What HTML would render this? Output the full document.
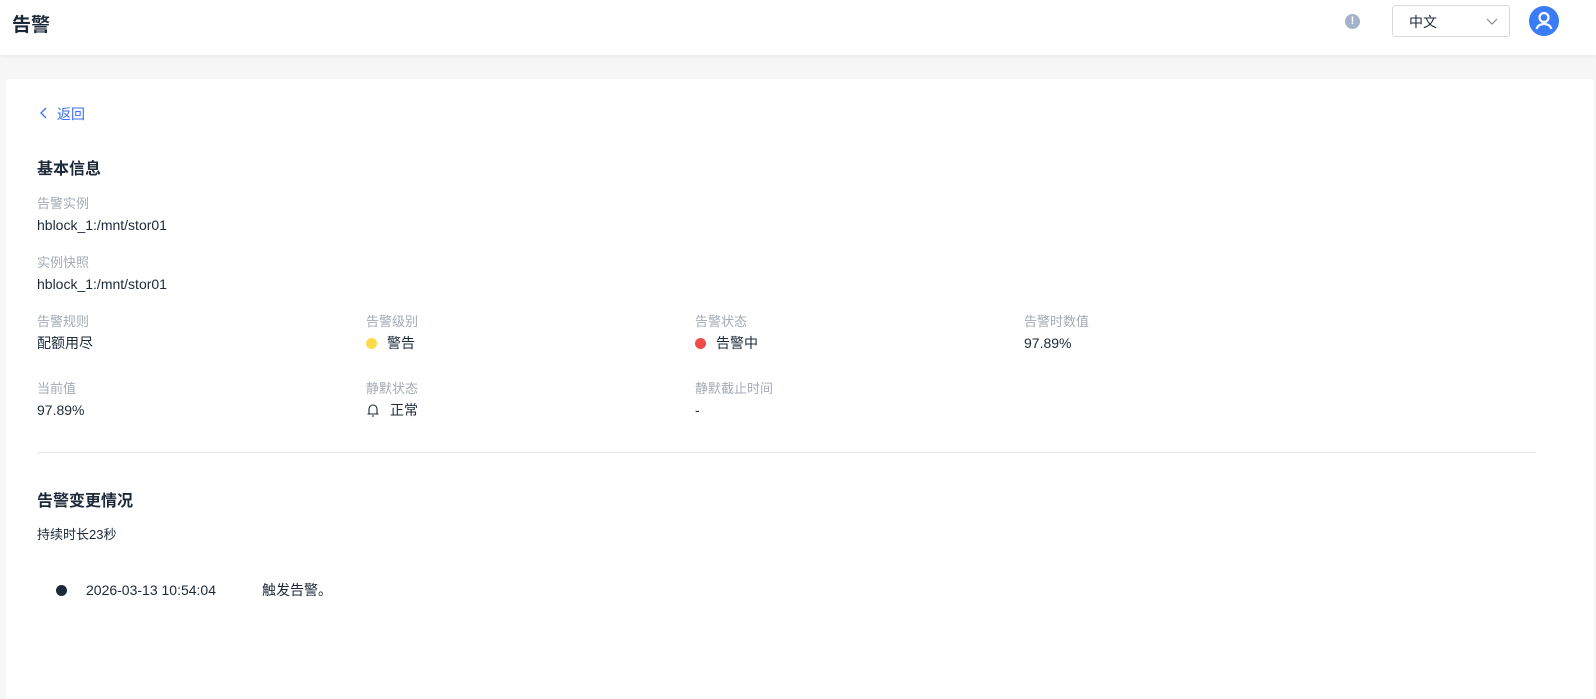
<!DOCTYPE html>
<html><head><meta charset="utf-8"><style>
*{margin:0;padding:0;box-sizing:border-box}
body{width:1596px;height:679px;overflow:hidden;background:#f7f7f7;font-family:"Liberation Sans","Noto Sans CJK SC",sans-serif;color:#1d2939;position:relative}
.hdr{position:absolute;left:0;top:0;width:1596px;height:55px;background:#fff;box-shadow:0 2px 4px rgba(0,0,0,.06)}
.t{position:absolute}
.card{position:absolute;left:6px;top:79px;width:1588px;height:620px;background:#fff;border-radius:4px}
.lab{position:absolute;font-size:13px;color:#a4abb5;line-height:16px}
.val{position:absolute;font-size:14px;color:#1d2939;line-height:18px}
.h{position:absolute;font-size:16px;font-weight:bold;color:#1d2939}
.dot{display:inline-block;width:11px;height:11px;border-radius:50%;vertical-align:-1px;margin-right:10px}
</style></head><body>
<div class="hdr">
 <div class="t" style="left:12px;top:10px;font-size:19px;font-weight:bold;color:#1d2939">告警</div>
 <div class="t" style="left:1345px;top:14px;width:15px;height:15px;border-radius:50%;background:#a3b3c9;color:#fff;font-size:11px;font-weight:bold;text-align:center;line-height:15px">!</div>
 <div class="t" style="left:1392px;top:5px;width:118px;height:32px;border:1px solid #d9d9d9;border-radius:3px">
  <span class="t" style="left:16px;top:6px;font-size:14px">中文</span>
  <svg class="t" style="left:93px;top:10px" width="12" height="10" viewBox="0 0 12 10"><path d="M1 3l5 5 5-5" fill="none" stroke="#888" stroke-width="1.2"/></svg>
 </div>
 <svg class="t" style="left:1529px;top:6px" width="30" height="30" viewBox="0 0 30 30"><circle cx="15" cy="15" r="15" fill="#3a7bf7"/><circle cx="15" cy="11.5" r="4.5" fill="none" stroke="#fff" stroke-width="2.2"/><path d="M7.5 23c1.5-4 4-5 7.5-5s6 1 7.5 5" fill="none" stroke="#fff" stroke-width="2.2"/></svg>
</div>
<div class="card"></div>
<svg class="t" style="left:39px;top:107px" width="10" height="12" viewBox="0 0 10 12"><path d="M7 1L2 6l5 5" fill="none" stroke="#3a6ff7" stroke-width="1.3"/></svg>
<div class="t" style="left:57px;top:104px;font-size:14px;color:#3a6ff7">返回</div>
<div class="h" style="left:37px;top:155px">基本信息</div>
<div class="lab" style="left:37px;top:196px">告警实例</div>
<div class="val" style="left:37px;top:216px">hblock_1:/mnt/stor01</div>
<div class="lab" style="left:37px;top:255px">实例快照</div>
<div class="val" style="left:37px;top:275px">hblock_1:/mnt/stor01</div>
<div class="lab" style="left:37px;top:314px">告警规则</div>
<div class="val" style="left:37px;top:334px">配额用尽</div>
<div class="lab" style="left:366px;top:314px">告警级别</div>
<div class="val" style="left:366px;top:334px"><span class="dot" style="background:#fddb4c"></span>警告</div>
<div class="lab" style="left:695px;top:314px">告警状态</div>
<div class="val" style="left:695px;top:334px"><span class="dot" style="background:#f24b4b"></span>告警中</div>
<div class="lab" style="left:1024px;top:314px">告警时数值</div>
<div class="val" style="left:1024px;top:334px">97.89%</div>
<div class="lab" style="left:37px;top:381px">当前值</div>
<div class="val" style="left:37px;top:401px">97.89%</div>
<div class="lab" style="left:366px;top:381px">静默状态</div>
<div class="val" style="left:366px;top:401px"><svg width="14" height="14" viewBox="0 0 14 14" style="vertical-align:-2px;margin-right:10px"><path d="M3 11V6a4 4 0 0 1 8 0v5M1.5 11h11M6 13h2" fill="none" stroke="#1d2939" stroke-width="1.1"/></svg>正常</div>
<div class="lab" style="left:695px;top:381px">静默截止时间</div>
<div class="val" style="left:695px;top:401px">-</div>
<div class="t" style="left:37px;top:452px;width:1499px;height:1px;background:#e5e7eb"></div>
<div class="h" style="left:37px;top:487px">告警变更情况</div>
<div class="val" style="left:37px;top:526px;font-size:13px">持续时长23秒</div>
<div class="t" style="left:56px;top:585px;width:11px;height:11px;border-radius:50%;background:#1d2939"></div>
<div class="val" style="left:86px;top:581px">2026-03-13 10:54:04</div>
<div class="val" style="left:262px;top:581px">触发告警。</div>
</body></html>
